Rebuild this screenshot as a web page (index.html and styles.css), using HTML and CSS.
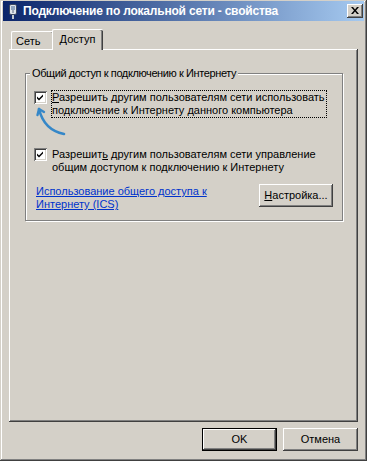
FILE: index.html
```html
<!DOCTYPE html>
<html lang="ru">
<head>
<meta charset="utf-8">
<title>Подключение по локальной сети - свойства</title>
<link rel="stylesheet" href="styles.css">
</head>
<body>
<div class="window">
  <div class="titlebar">
    <svg class="title-icon" width="8" height="15" viewBox="0 0 8 15">
      <rect x="0.5" y="0.5" width="7" height="10" rx="1.5" fill="#dfe4ea" stroke="#3a4660"/>
      <rect x="2" y="2" width="4" height="4" fill="#8fa3bf"/>
      <line x1="4" y1="6" x2="4" y2="9" stroke="#5a6880"/>
      <rect x="3" y="11" width="2" height="4" fill="#c0c8d0"/>
    </svg>
    <span class="title-text">Подключение по локальной сети - свойства</span>
    <button class="close-btn" aria-label="Закрыть">
      <svg width="8" height="7" viewBox="0 0 8 7"><path d="M0 0h2l2 2.5L6 0h2L5 3.5 8 7H6L4 4.5 2 7H0l3-3.5z" fill="#000"/></svg>
    </button>
  </div>
  <div class="body">
    <div class="tabs">
      <div class="tab">Сеть</div>
      <div class="tab active">Доступ</div>
    </div>
    <div class="pane">
      <fieldset class="group">
        <legend>Общий доступ к подключению к Интернету</legend>
        <div class="group-content">
          <div class="option">
            <span class="check"><svg width="9" height="9" viewBox="0 0 9 9"><path d="M1 3.5l2 2 4-4v2l-4 4-2-2z" fill="#000"/></svg></span>
            <span class="label focused"><u>Р</u>азрешить другим пользователям сети использовать<br>подключение к Интернету данного компьютера</span>
          </div>
          <div class="option second">
            <span class="check"><svg width="9" height="9" viewBox="0 0 9 9"><path d="M1 3.5l2 2 4-4v2l-4 4-2-2z" fill="#000"/></svg></span>
            <span class="label">Разрешит<u>ь</u> другим пользователям сети управление<br>общим доступом к подключению к Интернету</span>
          </div>
          <div class="links-row">
            <a class="link" href="#">Использование общего доступа к<br>Интернету (ICS)</a>
            <button class="btn settings"><u>Н</u>астройка...</button>
          </div>
        </div>
      </fieldset>
    </div>
    <div class="buttons">
      <button class="btn default">OK</button>
      <button class="btn">Отмена</button>
    </div>
  </div>
  <svg class="arrow" width="36" height="38" viewBox="0 0 36 38">
    <path d="M30 32 Q10 28 5 7" fill="none" stroke="#3587c8" stroke-width="2.6" stroke-linecap="round"/>
    <path d="M3.5 13 L5 7 L10 10" fill="none" stroke="#3587c8" stroke-width="2.4" stroke-linecap="round" stroke-linejoin="round"/>
  </svg>
</div>
</body>
</html>
```
FILE: styles.css
```css
* {
  box-sizing: border-box;
}

html,
body {
  margin: 0;
  padding: 0;
  background: #d4d0c8;
}

body {
  font-family: "Liberation Sans", Arial, sans-serif;
  font-size: 11px;
  line-height: 13px;
  color: #000;
}

.window {
  position: relative;
  width: 367px;
  height: 461px;
  padding: 1px 3px 3px 3px;
  background: #d4d0c8;
  box-shadow: inset -1px -1px #404040, inset 1px 1px #d4d0c8, inset -2px -2px #808080, inset 2px 2px #fff;
}

.titlebar {
  display: flex;
  align-items: center;
  height: 20px;
  padding: 0 1px 0 6px;
  background: linear-gradient(to right, #0a246a, #a6caf0);
  color: #fff;
}

.title-icon {
  flex: none;
  display: block;
}

.title-text {
  flex: 1;
  margin-left: 6px;
  font-weight: bold;
  font-size: 12px;
  letter-spacing: -0.2px;
  white-space: nowrap;
}

.close-btn {
  flex: none;
  display: flex;
  align-items: center;
  justify-content: center;
  width: 16px;
  height: 14px;
  padding: 0 0 1px 0;
  border: none;
  background: #d4d0c8;
  box-shadow: inset -1px -1px #404040, inset 1px 1px #fff, inset -2px -2px #808080, inset 2px 2px #d4d0c8;
}

.close-btn svg {
  display: block;
}

.body {
  padding: 8px 6px 0 6px;
}

.tabs {
  display: flex;
  align-items: flex-end;
  height: 20px;
  padding-left: 2px;
}

.tab {
  width: 43px;
  height: 18px;
  padding: 3px 0 0 4px;
  background: #d4d0c8;
  border-top: 1px solid #fff;
  border-left: 1px solid #fff;
  border-radius: 2px 2px 0 0;
  box-shadow: inset -1px 0 #404040, inset -2px 0 #808080;
}

.tab.active {
  position: relative;
  z-index: 1;
  width: 51px;
  height: 21px;
  margin-left: -2px;
  margin-bottom: -1px;
  padding: 3px 1px 0 0;
  text-align: center;
}

.pane {
  height: 373px;
  padding: 18px 13px 0 16px;
  box-shadow: inset -1px -1px #404040, inset 1px 1px #fff, inset -2px -2px #808080;
}

.group {
  width: 318px;
  min-width: 0;
  margin: 0;
  padding: 0 0 9px 0;
  border: 1px solid #808080;
  box-shadow: 1px 1px 0 #fff, inset 1px 1px 0 #fff;
}

.group legend {
  margin-left: 4px;
  padding: 0 2px;
  line-height: 13px;
  letter-spacing: -0.4px;
  background: #d4d0c8;
}

.group-content {
  padding: 10px 9px 0 8px;
}

.option {
  display: flex;
  align-items: flex-start;
}

.option.second {
  margin-top: 29px;
}

.check {
  flex: none;
  display: flex;
  align-items: center;
  justify-content: center;
  width: 13px;
  height: 13px;
  margin-top: 1px;
  margin-right: 4px;
  background: #fff;
  box-shadow: inset 1px 1px #808080, inset -1px -1px #fff, inset 2px 2px #404040, inset -2px -2px #d4d0c8;
}

.check svg {
  display: block;
}

.label {
  padding: 0 1px 0 0;
  border: 1px dotted transparent;
  white-space: nowrap;
}

.label.focused {
  border-color: #000;
}

.links-row {
  display: flex;
  justify-content: space-between;
  align-items: flex-start;
  margin-top: 9px;
}

.link {
  margin: 1px 0 0 2px;
  color: #0033cc;
  text-decoration: underline;
  white-space: nowrap;
}

.btn {
  width: 75px;
  height: 23px;
  padding: 0;
  border: none;
  background: #d4d0c8;
  color: #000;
  font: inherit;
  line-height: 13px;
  box-shadow: inset -1px -1px #404040, inset 1px 1px #fff, inset -2px -2px #808080, inset 2px 2px #d4d0c8;
}

.btn.settings {
  width: 74px;
}

.btn.default {
  border: 1px solid #000;
  box-shadow: inset -1px -1px #404040, inset 1px 1px #fff, inset -2px -2px #808080;
}

.buttons {
  display: flex;
  justify-content: flex-end;
  gap: 6px;
  margin-top: 6px;
}

.arrow {
  position: absolute;
  left: 34px;
  top: 102px;
}
```
